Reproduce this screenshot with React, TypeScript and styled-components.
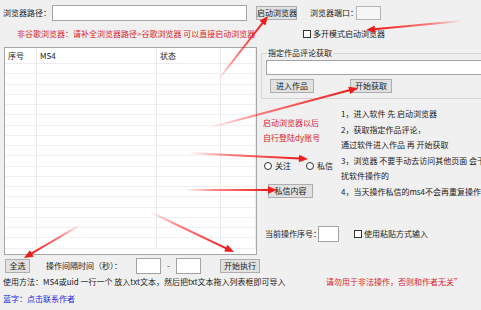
import React from "react";
import styled, { createGlobalStyle } from "styled-components";

const GlobalStyle = createGlobalStyle`
  html, body {
    margin: 0;
    padding: 0;
    background: #f0f0f0;
  }
  body {
    font-family: "Noto Sans CJK SC", "Noto Sans", sans-serif;
  }
`;

const Window = styled.div`
  position: relative;
  display: flex;
  flex-direction: column;
  width: 481px;
  height: 310px;
  overflow: hidden;
  background: #f0f0f0;
  font-size: 8px;
  line-height: 1;
  color: #1a1a1a;
`;

const Row = styled.div<{ $top?: number; $h?: number }>`
  display: flex;
  align-items: center;
  flex-shrink: 0;
  margin-top: ${(p) => p.$top ?? 0}px;
  height: ${(p) => (p.$h ? `${p.$h}px` : "auto")};
`;

const BottomAligned = styled(Row)`
  margin-top: auto;
  margin-bottom: 13px;
`;

const Label = styled.span<{ $w?: number; $ml?: number; $color?: string; $center?: boolean }>`
  flex-shrink: 0;
  white-space: nowrap;
  width: ${(p) => (p.$w ? `${p.$w}px` : "auto")};
  margin-left: ${(p) => p.$ml ?? 0}px;
  color: ${(p) => p.$color ?? "inherit"};
  text-align: ${(p) => (p.$center ? "center" : "left")};
`;

const TextBox = styled.div<{ $w: number; $h: number; $ml?: number; $gray?: boolean }>`
  flex-shrink: 0;
  box-sizing: border-box;
  width: ${(p) => p.$w}px;
  height: ${(p) => p.$h}px;
  margin-left: ${(p) => p.$ml ?? 0}px;
  background: ${(p) => (p.$gray ? "#f7f7f7" : "#fff")};
  border: 1px solid ${(p) => (p.$gray ? "#b4b4b4" : "#a3a3a3")};
`;

const Button = styled.button<{ $w: number; $ml?: number }>`
  flex-shrink: 0;
  box-sizing: border-box;
  width: ${(p) => p.$w}px;
  height: 14px;
  margin: 0 0 0 ${(p) => p.$ml ?? 0}px;
  padding: 0;
  font: inherit;
  color: #1a1a1a;
  background: #e1e1e1;
  border: 1px solid #adadad;
  white-space: nowrap;
`;

const CheckBox = styled.span<{ $ml?: number }>`
  flex-shrink: 0;
  box-sizing: border-box;
  width: 8px;
  height: 8px;
  margin-left: ${(p) => p.$ml ?? 0}px;
  margin-right: 2px;
  background: #fff;
  border: 1px solid #333;
`;

const Radio = styled(CheckBox)`
  border-radius: 50%;
  margin-right: 3px;
`;

/* list view */
const Main = styled.div`
  display: flex;
  height: 208px;
  margin-top: 7px;
  flex-shrink: 0;
`;

const ListView = styled.div`
  flex-shrink: 0;
  box-sizing: border-box;
  width: 253px;
  height: 208px;
  margin-left: 4px;
  background: #fff;
  border: 1px solid #a5a5a5;
  overflow: hidden;
`;

const ListRow = styled.div<{ $h: number; $head?: boolean }>`
  display: grid;
  grid-template-columns: 32px 120px 64px 1fr;
  height: ${(p) => p.$h}px;
  box-sizing: border-box;
  border-bottom: 1px solid ${(p) => (p.$head ? "#ececec" : "#f0f0f0")};
`;

const Cell = styled.div`
  display: flex;
  align-items: center;
  padding-left: 3px;
  border-right: 1px solid #ededed;
  white-space: nowrap;
`;

/* right side */
const RightPanel = styled.div`
  display: flex;
  flex-direction: column;
  flex: 1;
  min-width: 0;
  margin-left: 4px;
`;

const GroupBox = styled.div`
  position: relative;
  box-sizing: border-box;
  height: 46px;
  margin-top: 6px;
  border: 1px solid #d5d5d5;
  border-right: none;
  display: flex;
  flex-direction: column;
`;

const Legend = styled.span`
  position: absolute;
  top: -5px;
  left: 5px;
  padding: 0 1px;
  background: #f0f0f0;
  white-space: nowrap;
`;

const Lower = styled.div`
  display: flex;
  margin-top: 7px;
`;

const LeftCol = styled.div`
  display: flex;
  flex-direction: column;
  width: 78px;
  margin-left: 2px;
  padding-top: 9px;
  flex-shrink: 0;
`;

const RedLine = styled.div`
  height: 15px;
  line-height: 15px;
  color: #d8232b;
  white-space: nowrap;
`;

const Steps = styled.div`
  display: flex;
  flex-direction: column;
`;

const Step = styled.div`
  height: 15.5px;
  line-height: 15.5px;
  white-space: nowrap;
`;

const Overlay = styled.svg`
  position: absolute;
  left: 0;
  top: 0;
  pointer-events: none;
`;

type ArrowProps = { id: string; x1: number; y1: number; x2: number; y2: number };

const Arrow = ({ id, x1, y1, x2, y2 }: ArrowProps) => {
  const a = Math.atan2(y2 - y1, x2 - x1);
  const len = 9;
  const half = 3.8;
  const bx = x2 - Math.cos(a) * len;
  const by = y2 - Math.sin(a) * len;
  const nx = -Math.sin(a) * half;
  const ny = Math.cos(a) * half;
  return (
    <g>
      <defs>
        <linearGradient id={id} gradientUnits="userSpaceOnUse" x1={x1} y1={y1} x2={bx} y2={by}>
          <stop offset="0" stopColor="#f22" stopOpacity="0" />
          <stop offset="0.35" stopColor="#f22" stopOpacity="0.55" />
          <stop offset="1" stopColor="#ee1c1c" stopOpacity="1" />
        </linearGradient>
      </defs>
      <line x1={x1} y1={y1} x2={bx + Math.cos(a)} y2={by + Math.sin(a)} stroke={`url(#${id})`} strokeWidth={2} />
      <polygon points={`${x2},${y2} ${bx + nx},${by + ny} ${bx - nx},${by - ny}`} fill="#ee1c1c" />
    </g>
  );
};

const arrows: ArrowProps[] = [
  { id: "a1", x1: 218, y1: 80, x2: 268, y2: 16 },
  { id: "a2", x1: 462, y1: 21, x2: 366, y2: 30 },
  { id: "a3", x1: 208, y1: 128, x2: 358, y2: 88 },
  { id: "a4", x1: 188, y1: 153, x2: 308, y2: 159 },
  { id: "a5", x1: 185, y1: 190, x2: 277, y2: 190 },
  { id: "a6", x1: 150, y1: 212, x2: 234, y2: 252 },
  { id: "a7", x1: 80, y1: 225, x2: 24, y2: 258 },
];

const rows = Array.from({ length: 18 });

export default function App() {
  return (
    <>
      <GlobalStyle />
      <Window>
        <Row $top={5} $h={16}>
          <Label $w={49} $ml={3}>浏览器路径：</Label>
          <TextBox $w={195} $h={16} />
          <Button $w={41} $ml={9}>启动浏览器</Button>
          <Label $w={46} $ml={13}>浏览器端口：</Label>
          <TextBox $w={25} $h={14} $gray />
        </Row>

        <Row $top={7} $h={12}>
          <Label $w={286} $ml={17} $color="#d8232b">
            非谷歌浏览器：请补全浏览器路径&gt;谷歌浏览器 可以直接启动浏览器
          </Label>
          <CheckBox />
          <Label>多开模式启动浏览器</Label>
        </Row>

        <Main>
          <ListView>
            <ListRow $h={16} $head>
              <Cell>序号</Cell>
              <Cell>MS4</Cell>
              <Cell>状态</Cell>
              <Cell />
            </ListRow>
            {rows.map((_, i) => (
              <ListRow key={i} $h={10.25}>
                <Cell />
                <Cell />
                <Cell />
                <Cell />
              </ListRow>
            ))}
          </ListView>

          <RightPanel>
            <GroupBox>
              <Legend>指定作品评论获取</Legend>
              <Row $top={6}>
                <TextBox $w={230} $h={15} $ml={4} />
              </Row>
              <Row $top={4}>
                <Button $w={44} $ml={8}>进入作品</Button>
                <Button $w={42} $ml={36}>开始获取</Button>
              </Row>
            </GroupBox>

            <Lower>
              <LeftCol>
                <RedLine>启动浏览器以后</RedLine>
                <RedLine>自行登陆dy账号</RedLine>
                <Row $top={16} $h={10}>
                  <Radio $ml={1} />
                  <Label>关注</Label>
                  <Radio $ml={15} />
                  <Label>私信</Label>
                </Row>
                <Row $top={13}>
                  <Button $w={45} $ml={5}>私信内容</Button>
                </Row>
              </LeftCol>
              <Steps>
                <Step>1，进入软件 先 启动浏览器</Step>
                <Step>2，获取指定作品评论，</Step>
                <Step>通过软件进入作品 再 开始获取</Step>
                <Step>3，浏览器 不要手动去访问其他页面 会干</Step>
                <Step>扰软件操作的</Step>
                <Step>4，当天操作私信的ms4不会再重复操作私信</Step>
              </Steps>
            </Lower>

            <BottomAligned $h={16}>
              <Label $w={53} $ml={4}>当前操作序号：</Label>
              <TextBox $w={21} $h={16} />
              <CheckBox $ml={15} />
              <Label>使用粘贴方式输入</Label>
            </BottomAligned>
          </RightPanel>
        </Main>

        <Row $top={3} $h={16}>
          <Button $w={25} $ml={5}>全选</Button>
          <Label $w={90} $ml={16}>操作间隔时间（秒）：</Label>
          <TextBox $w={25} $h={16} />
          <Label $w={15} $center>-</Label>
          <TextBox $w={25} $h={16} />
          <Button $w={40} $ml={19}>开始执行</Button>
        </Row>

        <Row $top={3} $h={10}>
          <Label $w={323} $ml={3}>
            使用方法：MS4或uid 一行一个 放入txt文本，然后把txt文本拖入列表框即可导入
          </Label>
          <Label $color="#d8232b">请勿用于非法操作，否则和作者无关”</Label>
        </Row>

        <Row $top={7} $h={10}>
          <Label $ml={3} $color="#1f1fe0">蓝字：点击联系作者</Label>
        </Row>

        <Overlay width={481} height={310} viewBox="0 0 481 310">
          {arrows.map((a) => (
            <Arrow key={a.id} {...a} />
          ))}
        </Overlay>
      </Window>
    </>
  );
}
